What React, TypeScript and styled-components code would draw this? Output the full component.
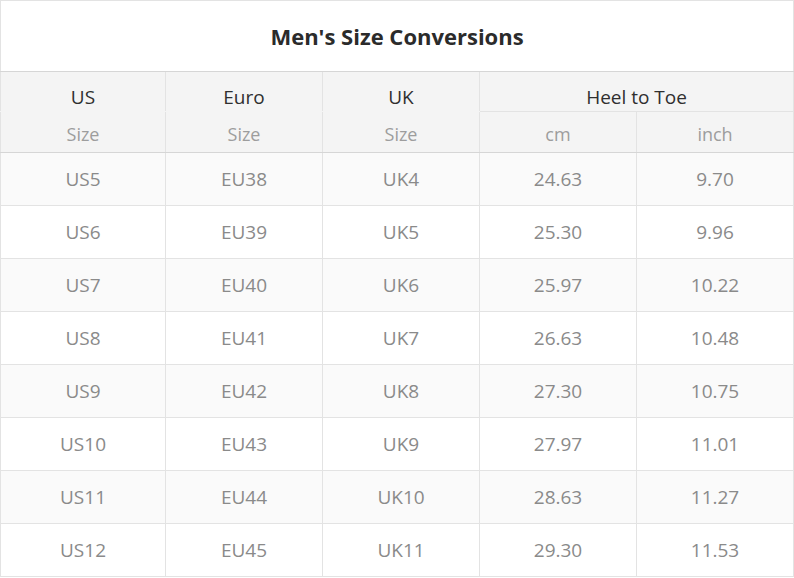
import React from "react";
import styled, { createGlobalStyle } from "styled-components";

const GlobalStyle = createGlobalStyle`
  body {
    margin: 0;
    background: #ffffff;
    font-family: "Open Sans", "Noto Sans", sans-serif;
  }
`;

type TRow = {
    us: string;
    eu: string;
    uk: string;
    cm: string;
    inch: string;
};

const rows: TRow[] = [
    {us: "US5", eu: "EU38", uk: "UK4", cm: "24.63", inch: "9.70"},
    {us: "US6", eu: "EU39", uk: "UK5", cm: "25.30", inch: "9.96"},
    {us: "US7", eu: "EU40", uk: "UK6", cm: "25.97", inch: "10.22"},
    {us: "US8", eu: "EU41", uk: "UK7", cm: "26.63", inch: "10.48"},
    {us: "US9", eu: "EU42", uk: "UK8", cm: "27.30", inch: "10.75"},
    {us: "US10", eu: "EU43", uk: "UK9", cm: "27.97", inch: "11.01"},
    {us: "US11", eu: "EU44", uk: "UK10", cm: "28.63", inch: "11.27"},
    {us: "US12", eu: "EU45", uk: "UK11", cm: "29.30", inch: "11.53"},
];

const Table = styled.table`
    width: 794px;
    border-collapse: collapse;
    table-layout: fixed;
    border: 1px solid #dcdcdc;

    td, th {
        border: 1px solid #e3e3e3;
        text-align: center;
        padding: 0;
    }
`;

const Col = styled.col<{ $wide?: boolean }>`
    width: ${props => props.$wide ? "165px" : "157px"};
`;

const TitleCell = styled.th`
    height: 70px;
    font-size: 22px;
    font-weight: 700;
    color: #2b2b2b;
    background: #ffffff;
    border-bottom-color: #d6d6d6 !important;
`;

const HeadCell = styled.th<{ $joined?: boolean }>`
    height: 40px;
    padding-top: 10px !important;
    box-sizing: border-box;
    font-size: 19px;
    font-weight: 400;
    color: #2f2f2f;
    background: #f4f4f4;
    ${props => props.$joined && "border-bottom-color: #f4f4f4 !important;"}
`;

const SubCell = styled.th`
    height: 41px;
    padding-top: 3px !important;
    box-sizing: border-box;
    font-size: 18px;
    font-weight: 400;
    color: #9d9d9d;
    background: #f4f4f4;
    border-bottom-color: #d6d6d6 !important;
`;

const DataRow = styled.tr<{ $shaded: boolean }>`
    background: ${props => props.$shaded ? "#fafafa" : "#ffffff"};

    td {
        height: 52px;
        font-size: 19px;
        color: #8a8a8a;
    }
`;

export default function App() {
    return (
        <>
            <GlobalStyle/>
            <Table>
                <colgroup>
                    <Col $wide/>
                    <Col/>
                    <Col/>
                    <Col/>
                    <Col/>
                </colgroup>
                <thead>
                    <tr>
                        <TitleCell colSpan={5}>Men's Size Conversions</TitleCell>
                    </tr>
                    <tr>
                        <HeadCell $joined>US</HeadCell>
                        <HeadCell $joined>Euro</HeadCell>
                        <HeadCell $joined>UK</HeadCell>
                        <HeadCell colSpan={2}>Heel to Toe</HeadCell>
                    </tr>
                    <tr>
                        <SubCell>Size</SubCell>
                        <SubCell>Size</SubCell>
                        <SubCell>Size</SubCell>
                        <SubCell>cm</SubCell>
                        <SubCell>inch</SubCell>
                    </tr>
                </thead>
                <tbody>
                    {rows.map((row, index) => (
                        <DataRow key={row.us} $shaded={index % 2 === 0}>
                            <td>{row.us}</td>
                            <td>{row.eu}</td>
                            <td>{row.uk}</td>
                            <td>{row.cm}</td>
                            <td>{row.inch}</td>
                        </DataRow>
                    ))}
                </tbody>
            </Table>
        </>
    );
}
